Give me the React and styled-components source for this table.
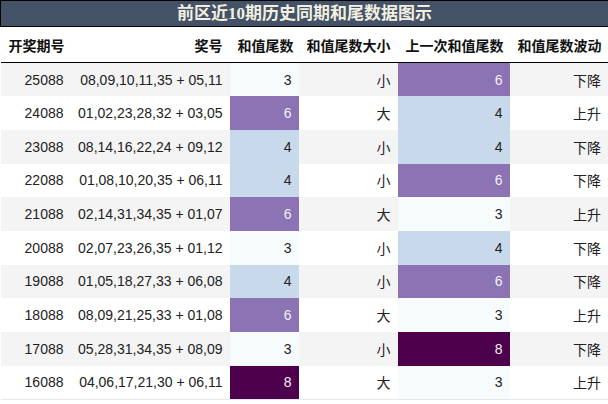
import React from 'react'
import styled, { createGlobalStyle } from 'styled-components'

const GlobalStyle = createGlobalStyle`
  html, body {
    margin: 0;
    padding: 0;
    background: #ffffff;
  }
  body {
    font-family: "Liberation Sans", "Noto Sans CJK SC", sans-serif;
    color: #222222;
  }
`

const rows = [
  { issue: '25088', nums: '08,09,10,11,35 + 05,11', tail: 3, size: '小', prev: 6, trend: '下降' },
  { issue: '24088', nums: '01,02,23,28,32 + 03,05', tail: 6, size: '大', prev: 4, trend: '上升' },
  { issue: '23088', nums: '08,14,16,22,24 + 09,12', tail: 4, size: '小', prev: 4, trend: '下降' },
  { issue: '22088', nums: '01,08,10,20,35 + 06,11', tail: 4, size: '小', prev: 6, trend: '下降' },
  { issue: '21088', nums: '02,14,31,34,35 + 01,07', tail: 6, size: '大', prev: 3, trend: '上升' },
  { issue: '20088', nums: '02,07,23,26,35 + 01,12', tail: 3, size: '小', prev: 4, trend: '下降' },
  { issue: '19088', nums: '01,05,18,27,33 + 06,08', tail: 4, size: '小', prev: 6, trend: '下降' },
  { issue: '18088', nums: '08,09,21,25,33 + 01,08', tail: 6, size: '大', prev: 3, trend: '上升' },
  { issue: '17088', nums: '05,28,31,34,35 + 08,09', tail: 3, size: '小', prev: 8, trend: '下降' },
  { issue: '16088', nums: '04,06,17,21,30 + 06,11', tail: 8, size: '大', prev: 3, trend: '上升' },
]

// BuPu-like scale for the tail values
const heat = {
  3: { bg: '#f6fbfc', fg: '#222222' },
  4: { bg: '#c7d9ea', fg: '#222222' },
  6: { bg: '#8c73b4', fg: '#f1f1f1' },
  8: { bg: '#4d004b', fg: '#f1f1f1' },
}

export default function App() {
  return (
    <>
      <GlobalStyle />
      <Table>
        <colgroup>
          <col style={{ width: 70 }} />
          <col style={{ width: 159 }} />
          <col style={{ width: 69 }} />
          <col style={{ width: 99 }} />
          <col style={{ width: 112 }} />
          <col style={{ width: 99 }} />
        </colgroup>
        <thead>
          <tr>
            <Caption colSpan={6}>前区近10期历史同期和尾数据图示</Caption>
          </tr>
          <tr>
            <Head $left>开奖期号</Head>
            <Head>奖号</Head>
            <Head>和值尾数</Head>
            <Head>和值尾数大小</Head>
            <Head>上一次和值尾数</Head>
            <Head>和值尾数波动</Head>
          </tr>
        </thead>
        <tbody>
          {rows.map((r, i) => (
            <Row key={r.issue} $striped={i % 2 === 0}>
              <Cell>{r.issue}</Cell>
              <Cell>{r.nums}</Cell>
              <HeatCell $bg={heat[r.tail].bg} $fg={heat[r.tail].fg}>{r.tail}</HeatCell>
              <Cell>{r.size}</Cell>
              <HeatCell $bg={heat[r.prev].bg} $fg={heat[r.prev].fg}>{r.prev}</HeatCell>
              <Cell>{r.trend}</Cell>
            </Row>
          ))}
        </tbody>
      </Table>
    </>
  )
}

const Table = styled.table`
  width: 608px;
  border-collapse: collapse;
  table-layout: fixed;
  border-right: 1px solid #e8e8e8;
  border-bottom: 1px solid #e8e8e8;
`

const Caption = styled.th`
  height: 25px;
  padding: 0;
  background-color: #435267;
  border: 1px solid #000000;
  color: #f3efe0;
  font-family: "Liberation Serif", "Noto Sans CJK SC", serif;
  font-size: 17px;
  font-weight: bold;
  text-align: center;
  line-height: 25px;
`

const Head = styled.th`
  height: 35px;
  padding: 0 7px 0 8px;
  font-size: 14px;
  font-weight: bold;
  color: #111111;
  text-align: ${(p) => (p.$left ? 'left' : 'right')};
  border-bottom: 1px solid #000000;
  white-space: nowrap;
`

const Row = styled.tr`
  height: 33.7px;
  background-color: ${(p) => (p.$striped ? '#f4f4f4' : '#ffffff')};
`

const Cell = styled.td`
  padding: 0 7px 0 0;
  font-size: 14px;
  text-align: right;
  white-space: nowrap;
  color: #222222;
`

const HeatCell = styled(Cell)`
  background-color: ${(p) => p.$bg};
  color: ${(p) => p.$fg};
`
